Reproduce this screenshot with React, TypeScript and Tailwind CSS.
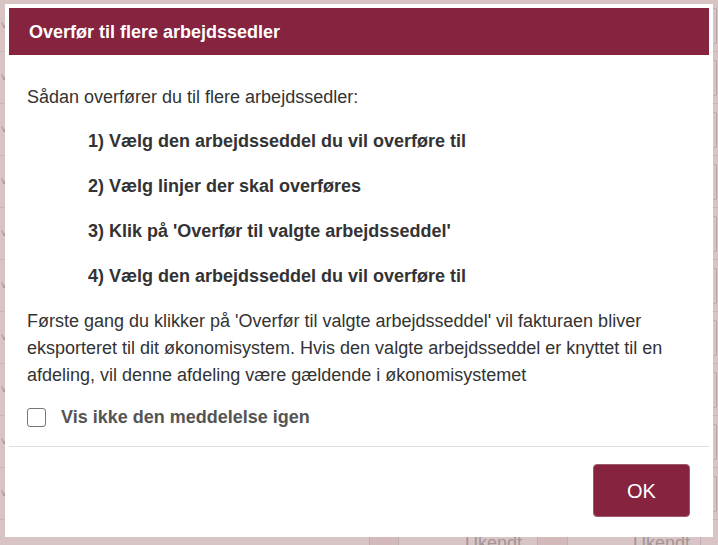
import { useState } from "react";

const STEPS = [
  "1) Vælg den arbejdsseddel du vil overføre til",
  "2) Vælg linjer der skal overføres",
  "3) Klik på 'Overfør til valgte arbejdsseddel'",
  "4) Vælg den arbejdsseddel du vil overføre til",
];

const BG_ROWS = Array.from({ length: 10 }, (_, i) => i);

export default function App() {
  const [hide, setHide] = useState(false);

  return (
    <div className="relative w-[718px] h-[545px] overflow-hidden bg-[#d8c4c5] font-['Liberation_Sans',Arial,sans-serif]">
      {/* faded page behind the overlay */}
      <div className="flex flex-col">
        {BG_ROWS.map((i) => (
          <div key={i} className="h-[52px] flex items-center justify-between border-b border-[#cbb6b7]">
            <span className="text-[10px] leading-none text-[#9a8a8b] pl-[1px]">˅</span>
            <div className="w-[3px] h-[36px] mr-[1px] border border-l-0 border-[#b7a5a6] rounded-r-[2px]" />
          </div>
        ))}
      </div>
      <div className="absolute left-0 right-0 top-[537px] h-[12px] flex items-start text-[18px] leading-none text-[#a49495]">
        <div className="w-[369px]" />
        <div className="w-[30px] h-full bg-[#d3b9ba] border-x border-[#bfaeaf]" />
        <div className="w-[138px] text-right pr-[15px] -mt-[3px]">Ukendt</div>
        <div className="w-[31px] h-full bg-[#d3b9ba] border-x border-[#bfaeaf]" />
        <div className="w-[132px] text-right pr-[10px] -mt-[3px]">Ukendt</div>
        <div className="w-px h-full bg-[#bfaeaf]" />
      </div>

      {/* dialog */}
      <div className="absolute left-[5px] top-[4px] w-[708px] h-[533px] bg-white p-[4px] flex flex-col">
        <div className="h-[47px] shrink-0 bg-[#86233f] flex items-center px-[20px]">
          <h2 className="text-[18px] font-bold text-white leading-none">Overfør til flere arbejdssedler</h2>
        </div>

        <div className="px-[18px] pt-[29px] text-[18px] leading-[27px] text-[#333]">
          <p>Sådan overfører du til flere arbejdssedler:</p>
          <ol className="mt-[17px] pl-[61px] flex flex-col gap-[18px] font-bold">
            {STEPS.map((s, i) => (
              <li key={i}>{s}</li>
            ))}
          </ol>
          <p className="mt-[18px]">
            Første gang du klikker på 'Overfør til valgte arbejdsseddel' vil fakturaen bliver eksporteret til dit
            økonomisystem. Hvis den valgte arbejdsseddel er knyttet til en afdeling, vil denne afdeling være
            gældende i økonomisystemet
          </p>
          <label className="mt-[15px] flex items-center gap-[15px] font-bold text-[#555] cursor-pointer">
            <input
              type="checkbox"
              checked={hide}
              onChange={(e) => setHide(e.target.checked)}
              className="appearance-none w-[19px] h-[19px] rounded-[3px] border border-[#767676] bg-white checked:bg-[#86233f]"
            />
            Vis ikke den meddelelse igen
          </label>
        </div>

        <div className="mt-[15px] border-t border-[#ddd] flex justify-end pt-[17px] pr-[19px]">
          <button className="w-[97px] h-[53px] rounded-[4px] bg-[#86233f] border border-[#9d5a6c] text-white text-[20px]">
            OK
          </button>
        </div>
      </div>
    </div>
  );
}
